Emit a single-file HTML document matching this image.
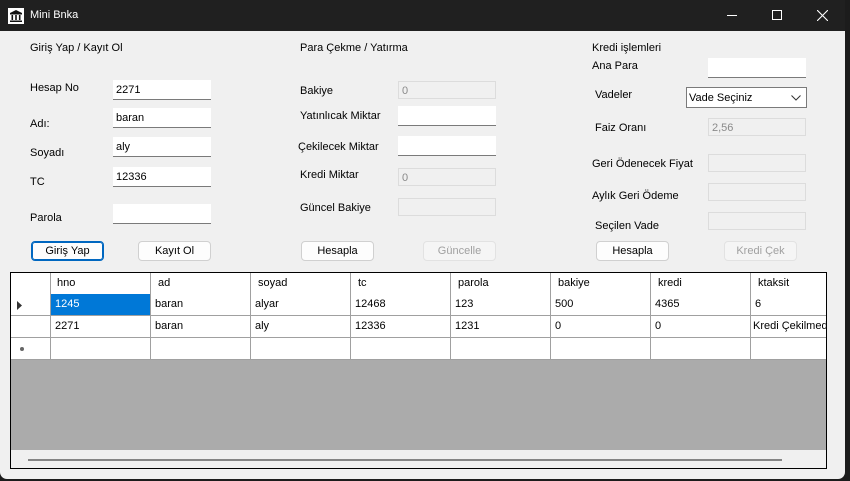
<!DOCTYPE html>
<html><head><meta charset="utf-8"><style>
*{margin:0;padding:0;box-sizing:border-box}
body{width:850px;height:481px;background:#1c1c1c;font-family:"Liberation Sans",sans-serif;font-size:11px;color:#000;position:relative;overflow:hidden}
.win{position:absolute;left:0;top:0;width:845px;height:479px;background:#f0f0f0;border-radius:0 0 7px 7px;overflow:hidden}
.tb{position:absolute;left:0;top:0;width:845px;height:31px;background:#202020;color:#fff}
.a{position:absolute;white-space:nowrap}
.in{position:absolute;background:#fff;border-bottom:1px solid #7a7a7a;height:20px;padding:4px 3px;font-size:11px}
.dis{position:absolute;background:#f0f0f0;border:1px solid #dcdcdc;height:18px;padding:3px 3px;color:#8a8a8a}
.btn{position:absolute;background:#fdfdfd;border:1px solid #d0d0d0;border-radius:4px;height:20px;text-align:center;line-height:18px}
.btn.p{border:1px solid #0067c0;box-shadow:inset 0 0 0 1px #0067c0}
.btn.d{color:#a0a0a0;background:#f5f5f5;border-color:#e2e2e2}
.grid{position:absolute;left:10px;top:272px;width:817px;height:197px;border:1px solid #000;background:#ababab;overflow:hidden}
.c{position:absolute;background:#fff;border-right:1px solid #a0a0a0;border-bottom:1px solid #a0a0a0;height:22px;padding:4px 4px;white-space:nowrap;overflow:hidden}
</style></head><body>
<div class="win">
<div class="tb">
<svg style="position:absolute;left:8px;top:8px" width="16" height="16" viewBox="0 0 16 16"><rect width="16" height="16" fill="#fff"/><path d="M2 5L8 2L14 5Z" fill="#111"/><rect x="2" y="5" width="12" height="1.5" fill="#111"/><rect x="3.5" y="7" width="1.6" height="5" fill="#111"/><rect x="7.2" y="7" width="1.6" height="5" fill="#111"/><rect x="10.9" y="7" width="1.6" height="5" fill="#111"/><rect x="2" y="12.5" width="12" height="1.5" fill="#111"/></svg>
<div class="a" style="left:30px;top:9px;font-size:11px">Mini Bnka</div>
<div class="a" style="left:727px;top:15px;width:10px;height:1px;background:#fff"></div>
<div class="a" style="left:772px;top:10px;width:10px;height:10px;border:1px solid #fff"></div>
<svg class="a" style="left:817px;top:10px" width="11" height="11"><path d="M0 0L11 11M11 0L0 11" stroke="#fff" stroke-width="1.1"/></svg>
</div>

<div class="a" style="left:30px;top:42px">Giriş Yap / Kayıt Ol</div>
<div class="a" style="left:30px;top:82px">Hesap No</div>
<div class="in" style="left:113px;top:80px;width:98px">2271</div>
<div class="a" style="left:30px;top:118px">Adı:</div>
<div class="in" style="left:113px;top:108px;width:98px">baran</div>
<div class="a" style="left:30px;top:147px">Soyadı</div>
<div class="in" style="left:113px;top:137px;width:98px">aly</div>
<div class="a" style="left:30px;top:176px">TC</div>
<div class="in" style="left:113px;top:167px;width:98px">12336</div>
<div class="a" style="left:30px;top:212px">Parola</div>
<div class="in" style="left:113px;top:204px;width:98px"></div>
<div class="btn p" style="left:31px;top:241px;width:73px">Giriş Yap</div>
<div class="btn" style="left:138px;top:241px;width:73px">Kayıt Ol</div>

<div class="a" style="left:300px;top:42px">Para Çekme / Yatırma</div>
<div class="a" style="left:300px;top:85px">Bakiye</div>
<div class="dis" style="left:398px;top:81px;width:98px">0</div>
<div class="a" style="left:300px;top:110px">Yatınlıcak Miktar</div>
<div class="in" style="left:398px;top:106px;width:98px"></div>
<div class="a" style="left:298px;top:141px">Çekilecek Miktar</div>
<div class="in" style="left:398px;top:136px;width:98px"></div>
<div class="a" style="left:300px;top:169px">Kredi Miktar</div>
<div class="dis" style="left:398px;top:168px;width:98px">0</div>
<div class="a" style="left:300px;top:202px">Güncel Bakiye</div>
<div class="dis" style="left:398px;top:198px;width:98px"></div>
<div class="btn" style="left:301px;top:241px;width:73px">Hesapla</div>
<div class="btn d" style="left:423px;top:241px;width:73px">Güncelle</div>

<div class="a" style="left:592px;top:42px">Kredi işlemleri</div>
<div class="a" style="left:592px;top:60px">Ana Para</div>
<div class="in" style="left:708px;top:58px;width:98px"></div>
<div class="a" style="left:595px;top:89px">Vadeler</div>
<div class="a" style="left:686px;top:87px;width:121px;height:21px;background:#fff;border:1px solid #7a7a7a;padding:4px 2px">Vade Seçiniz
<svg style="position:absolute;right:5px;top:7px" width="10" height="6"><path d="M0.5 0.5L5 5L9.5 0.5" stroke="#333" fill="none"/></svg></div>
<div class="a" style="left:595px;top:122px">Faiz Oranı</div>
<div class="dis" style="left:708px;top:118px;width:98px">2,56</div>
<div class="a" style="left:592px;top:158px">Geri Ödenecek Fiyat</div>
<div class="dis" style="left:708px;top:154px;width:98px"></div>
<div class="a" style="left:592px;top:190px">Aylık Geri Ödeme</div>
<div class="dis" style="left:708px;top:183px;width:98px"></div>
<div class="a" style="left:595px;top:220px">Seçilen Vade</div>
<div class="dis" style="left:708px;top:212px;width:98px"></div>
<div class="btn" style="left:596px;top:241px;width:73px">Hesapla</div>
<div class="btn d" style="left:724px;top:241px;width:73px">Kredi Çek</div>

<div class="grid">
<div class="c" style="left:0;top:0;width:40px"></div>
<div class="c" style="left:40px;top:0;width:100px;padding-left:6px">hno</div>
<div class="c" style="left:140px;top:0;width:100px;padding-left:7px">ad</div>
<div class="c" style="left:240px;top:0;width:100px;padding-left:7px">soyad</div>
<div class="c" style="left:340px;top:0;width:100px;padding-left:7px">tc</div>
<div class="c" style="left:440px;top:0;width:100px;padding-left:7px">parola</div>
<div class="c" style="left:540px;top:0;width:100px;padding-left:7px">bakiye</div>
<div class="c" style="left:640px;top:0;width:100px;padding-left:7px">kredi</div>
<div class="c" style="left:740px;top:0;width:76px;border-right:none;padding-left:7px">ktaksit</div>

<div class="c" style="left:0;top:21px;width:40px"><svg width="8" height="10" style="position:absolute;left:6px;top:7px"><path d="M0 0L5 4.5L0 9Z" fill="#333"/></svg></div>
<div class="c" style="left:40px;top:21px;width:100px;background:#0078d7;color:#fff">1245</div>
<div class="c" style="left:140px;top:21px;width:100px">baran</div>
<div class="c" style="left:240px;top:21px;width:100px">alyar</div>
<div class="c" style="left:340px;top:21px;width:100px">12468</div>
<div class="c" style="left:440px;top:21px;width:100px">123</div>
<div class="c" style="left:540px;top:21px;width:100px">500</div>
<div class="c" style="left:640px;top:21px;width:100px">4365</div>
<div class="c" style="left:740px;top:21px;width:76px;border-right:none">6</div>

<div class="c" style="left:0;top:43px;width:40px"></div>
<div class="c" style="left:40px;top:43px;width:100px">2271</div>
<div class="c" style="left:140px;top:43px;width:100px">baran</div>
<div class="c" style="left:240px;top:43px;width:100px">aly</div>
<div class="c" style="left:340px;top:43px;width:100px">12336</div>
<div class="c" style="left:440px;top:43px;width:100px">1231</div>
<div class="c" style="left:540px;top:43px;width:100px">0</div>
<div class="c" style="left:640px;top:43px;width:100px">0</div>
<div class="c" style="left:740px;top:43px;width:76px;border-right:none;padding-left:2px">Kredi Çekilmedi</div>

<div class="c" style="left:0;top:65px;width:40px"><div style="position:absolute;left:9px;top:9px;width:4px;height:4px;border-radius:2px;background:#666"></div></div>
<div class="c" style="left:40px;top:65px;width:100px"></div>
<div class="c" style="left:140px;top:65px;width:100px"></div>
<div class="c" style="left:240px;top:65px;width:100px"></div>
<div class="c" style="left:340px;top:65px;width:100px"></div>
<div class="c" style="left:440px;top:65px;width:100px"></div>
<div class="c" style="left:540px;top:65px;width:100px"></div>
<div class="c" style="left:640px;top:65px;width:100px"></div>
<div class="c" style="left:740px;top:65px;width:76px;border-right:none"></div>
<div style="position:absolute;left:0;top:177px;width:815px;height:18px;background:#f0f0f0"></div>
<div style="position:absolute;left:17px;top:186px;width:754px;height:2px;background:#858585"></div>
</div>
</div>
</body></html>
